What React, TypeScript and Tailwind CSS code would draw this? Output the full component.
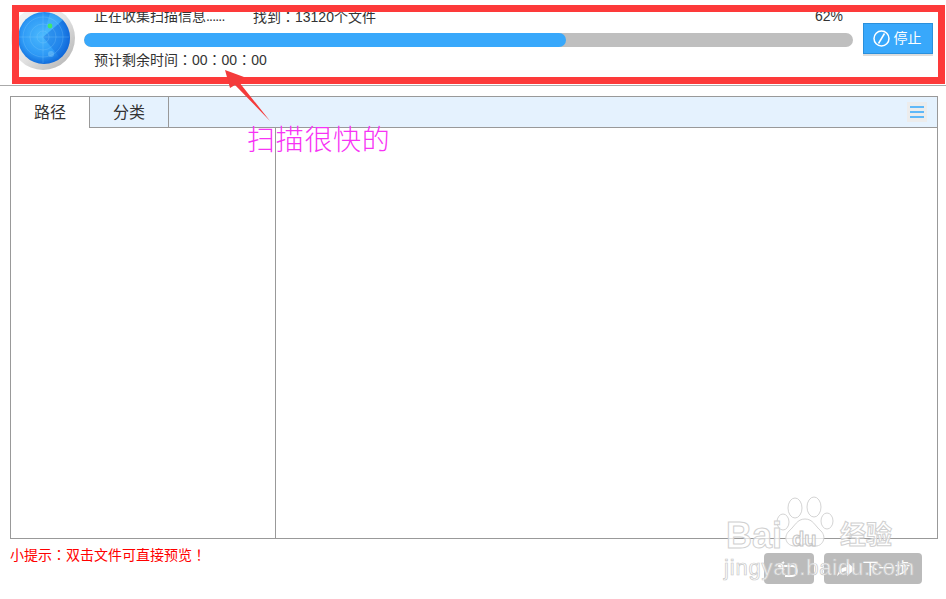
import React from 'react'

const FONT = 'font-["Liberation_Sans","Noto_Sans_CJK_SC",sans-serif]'

// full width punctuation sits centered in the reference, the TC cut draws it that way
const Punct = ({children}: {children: string}) => (
	<span className='font-["Noto_Sans_CJK_TC",sans-serif]'>{children}</span>
)

const RadarIcon = () => (
	<svg width="66" height="66" viewBox="0 0 66 66" className="shrink-0">
		<defs>
			<linearGradient id="ring" x1="0" y1="0" x2="1" y2="1">
				<stop offset="0" stopColor="#f8f8f8" />
				<stop offset="0.5" stopColor="#e4e4e4" />
				<stop offset="1" stopColor="#aeaeae" />
			</linearGradient>
			<radialGradient id="dish" cx="0.45" cy="0.45" r="0.58">
				<stop offset="0" stopColor="#4ab8fd" />
				<stop offset="0.65" stopColor="#2e9af6" />
				<stop offset="1" stopColor="#0d66d8" />
			</radialGradient>
		</defs>
		<circle cx="33" cy="33" r="32" fill="url(#ring)" />
		<circle cx="34" cy="33" r="26" fill="url(#dish)" />
		<path d="M33 32 L53 15 A26 26 0 0 1 60 33 A26 26 0 0 1 50 53 Z" fill="#0f62d8" opacity="0.35" />
		<path d="M33 32 L53 15 A26 26 0 0 0 40 8 Z" fill="#4dbdfd" opacity="0.5" />
		<g fill="none" stroke="#8fd2fb" strokeOpacity="0.3" strokeWidth="0.8">
			<circle cx="33" cy="32" r="6" />
			<circle cx="33" cy="32" r="13" />
			<circle cx="33" cy="32" r="20" />
			<path d="M8 32H59M33 7V58" />
		</g>
		<circle cx="40" cy="21" r="2.4" fill="#3fe86a" />
		<circle cx="41" cy="49" r="3" fill="#8fd2fb" opacity="0.4" />
	</svg>
)

const ScanHeader = () => (
	<div className="h-[86px] border-b border-[#aaaaaa] flex items-start pl-[10px]">
		<div className="pt-[5px]">
			<RadarIcon />
		</div>
		<div className="w-[769px] ml-[8px] pt-[9px]">
			<div className="h-[14px] leading-[14px] text-[14px] text-[#333] flex pl-[10px] pr-[10px]">
				<span className="w-[159px]">正在收集扫描信息<span className="tracking-[-0.8px]">......</span></span>
				<span>找到<Punct>：</Punct>13120个文件</span>
				<span className="ml-auto">62%</span>
			</div>
			<div className="mt-[10px] h-[14px] rounded-full bg-[#bfbfbf] overflow-hidden">
				<div className="h-full w-[482px] rounded-full bg-[#38a8fb]" />
			</div>
			<div className="mt-[5px] pl-[10px] h-[14px] leading-[14px] text-[14px] text-[#333]">
				预计剩余时间<Punct>：</Punct>00<Punct>：</Punct>00<Punct>：</Punct>00
			</div>
		</div>
		<button className="ml-[10px] mt-[23px] w-[70px] h-[31px] pr-[2px] flex items-center justify-center gap-[4px] bg-[#38a8fb] border border-[#2a90dc] shadow-[0_2px_0_#dddddd] text-white text-[14px]">
			<svg width="17" height="17" viewBox="0 0 17 17" fill="none" stroke="white" strokeWidth="1.5">
				<circle cx="8.5" cy="8.5" r="7.5" />
				<path d="M5.5 13.5L11.5 3.5" />
			</svg>
			停止
		</button>
	</div>
)

const TabsPanel = () => (
	<div className="mt-[10px] ml-[10px] w-[928px] h-[443px] border border-[#999999] flex flex-col">
		<div className="h-[31px] bg-[#e5f2fe] border-b border-[#999999] flex shrink-0">
			<div className="w-[79px] h-[31px] pt-[1px] bg-white border-r border-[#999999] flex items-center justify-center text-[16px] text-[#333]">路径</div>
			<div className="w-[79px] pt-[1px] border-r border-[#999999] flex items-center justify-center text-[16px] text-[#333]">分类</div>
			<div className="ml-auto mr-[10px] mt-[5px] w-[20px] h-[20px] bg-[#ececec] flex flex-col items-center justify-center gap-[3px]">
				<div className="w-[14px] h-[2px] bg-[#5fb8f8]" />
				<div className="w-[14px] h-[2px] bg-[#5fb8f8]" />
				<div className="w-[14px] h-[2px] bg-[#5fb8f8]" />
			</div>
		</div>
		<div className="flex-1 flex">
			<div className="w-[265px] border-r border-[#999999]" />
			<div className="flex-1" />
		</div>
	</div>
)

const FooterRow = () => (
	<div className="flex items-start pl-[10px] pr-[24px] mt-[7px]">
		<div className="text-[14px] leading-[16px] text-[#ff0000]">小提示<Punct>：</Punct>双击文件可直接预览<Punct>！</Punct></div>
		<div className="ml-auto mt-[7px] flex gap-[10px]">
			<div className="w-[50px] h-[31px] rounded-[4px] bg-[#bbbbbb] flex items-center justify-center">
				<svg width="26" height="20" viewBox="0 0 26 20" fill="none" stroke="white" strokeWidth="2">
					<path d="M8 3L3 7l5 4" />
					<path d="M3 7h13a5 5 0 0 1 0 10H9" />
				</svg>
			</div>
			<div className="w-[98px] h-[31px] rounded-[4px] bg-[#bbbbbb] flex items-center justify-center gap-[3px] text-white text-[16px]">
				<svg width="24" height="18" viewBox="0 0 24 18" fill="white">
					<path d="M12 2l8 7-8 7z" />
					<path d="M2 16C4 9 7 7 13 7v4C8 11 5 13 2 16z" />
				</svg>
				下一步
			</div>
		</div>
	</div>
)

// baidu jingyan watermark, sits over the panel corner
const Watermark = () => (
	<div className="absolute left-[724px] top-[495px] w-[190px] h-[90px] pointer-events-none">
		<svg width="60" height="62" viewBox="0 0 60 62" className="absolute left-[52px] top-0" fill="#ffffff" fillOpacity="0.75" stroke="#d4d4d4">
			<ellipse cx="19" cy="13" rx="7" ry="10" />
			<ellipse cx="38" cy="12" rx="7" ry="10" />
			<ellipse cx="7" cy="27" rx="6" ry="8" />
			<ellipse cx="51" cy="26" rx="6" ry="8" />
			<path d="M29 24c8 0 10 7 16 12 6 6 2 16-7 15-4 0-6-2-9-2s-6 2-10 2c-9 0-12-9-6-15 6-5 8-12 16-12z" />
		</svg>
		<div className="absolute left-[2px] top-[23px] text-[36px] leading-[36px] font-bold text-white/70 [-webkit-text-stroke:1px_#d0d0d0]">Bai</div>
		<div className="absolute left-[68px] top-[33px] text-[20px] leading-[22px] font-bold text-white/70 [-webkit-text-stroke:1px_#c4c4c4]">du</div>
		<div className="absolute left-[116px] top-[26px] text-[26px] leading-[28px] font-bold text-white/70 [-webkit-text-stroke:1px_#d0d0d0]">经验</div>
		<div className="absolute left-0 top-[60px] text-[22px] leading-[26px] tracking-[0.8px] text-white/80 [-webkit-text-stroke:0.7px_#c8c8c8]">jingyan.baidu.com</div>
	</div>
)

const Annotation = () => (
	<>
		<div className="absolute left-[12px] top-[5px] w-[933px] h-[79px] border-[7px] border-[#fd3a3a] pointer-events-none" />
		<svg width="60" height="60" viewBox="0 0 60 60" className="absolute left-[220px] top-[65px]">
			<polygon points="5,5 24,12 19,17 50,56 15,20 10,23" fill="#f43b3b" />
		</svg>
		<div className="absolute left-[247px] top-[123px] text-[28px] leading-[36px] tracking-[0.7px] font-light text-[#f733f5]">扫描很快的</div>
	</>
)

export default function App() {
	return (
		<div className={`relative w-[946px] h-[599px] overflow-hidden bg-white ${FONT}`}>
			<ScanHeader />
			<TabsPanel />
			<FooterRow />
			<Watermark />
			<Annotation />
		</div>
	)
}
